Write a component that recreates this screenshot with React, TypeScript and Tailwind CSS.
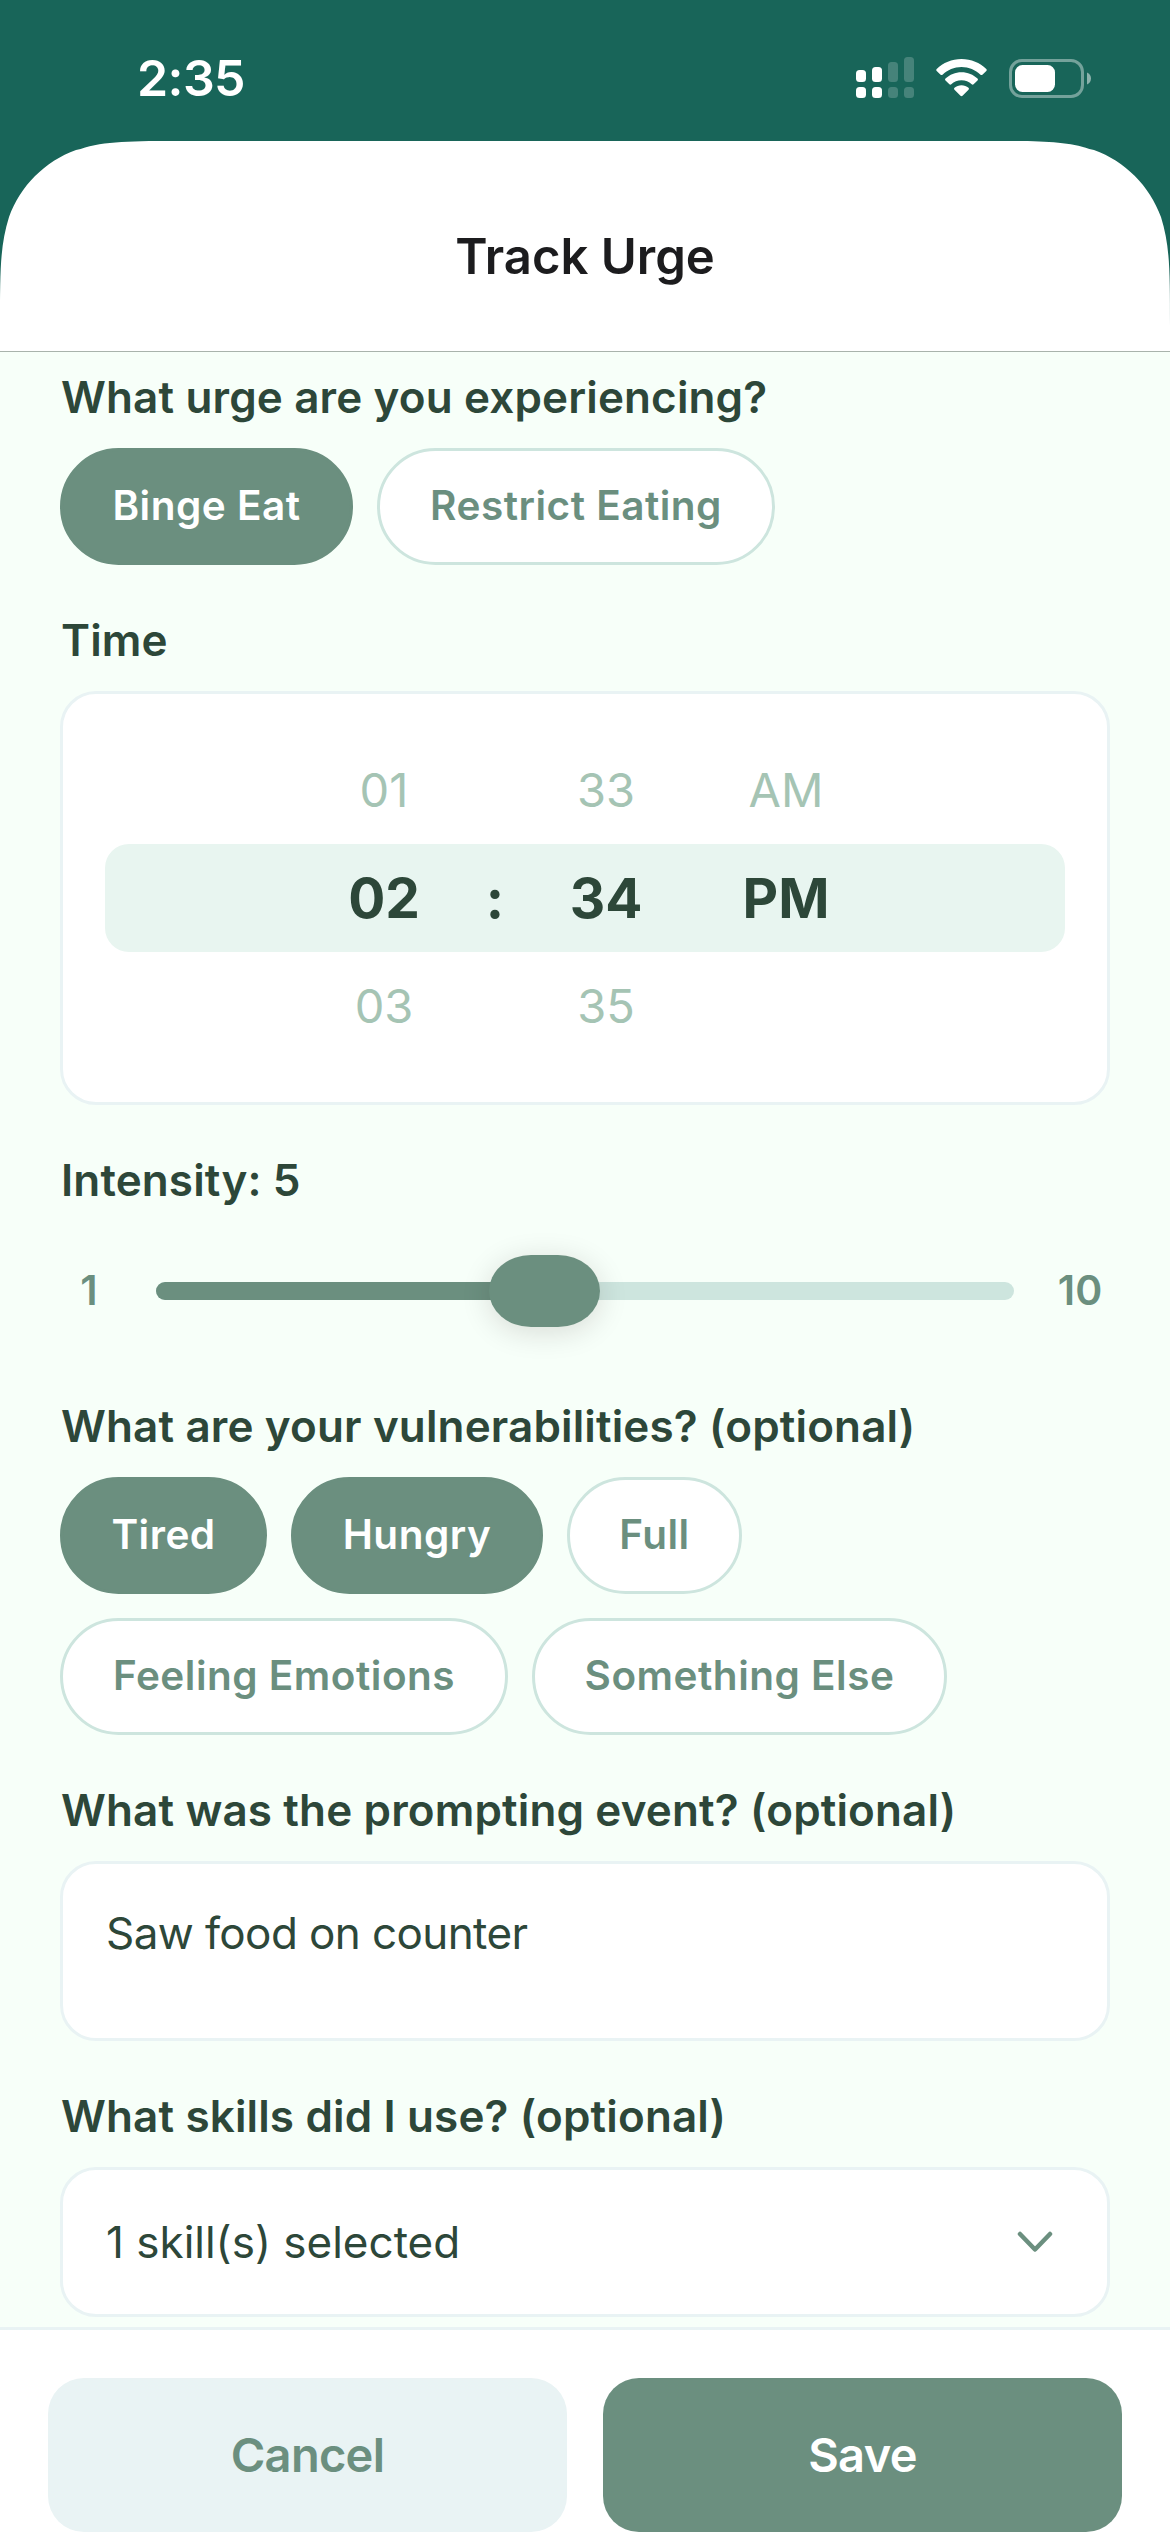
import { useState } from "react";
import clsx from "clsx";

const urges = [
  { label: "Binge Eat", width: "w-[293px]" },
  { label: "Restrict Eating", width: "w-[398px]" },
];

const vulnerabilities = [
  { label: "Tired", width: "w-[207px]" },
  { label: "Hungry", width: "w-[252px]" },
  { label: "Full", width: "w-[175px]" },
  { label: "Feeling Emotions", width: "w-[448px]" },
  { label: "Something Else", width: "w-[415px]" },
];

const StatusBar = () => (
  <div className="flex h-[141px] items-center justify-between pt-[15px] pr-[78px] pl-[137px] text-white">
    <span className="text-[50px] leading-none font-semibold tracking-[-0.6px]">2:35</span>
    <div className="flex items-center">
      {/* Dual SIM signal */}
      <svg className="mr-[22px]" width="58" height="42" viewBox="0 0 58 42" fill="currentColor">
        <rect x="0" y="13" width="10" height="12" rx="3.5" />
        <rect x="16" y="10" width="10" height="15" rx="3.5" />
        <rect x="32" y="5" width="10" height="20" rx="3.5" opacity="0.2" />
        <rect x="48" y="0" width="10" height="25" rx="3.5" opacity="0.2" />
        <rect x="0" y="30" width="10" height="11" rx="3.5" />
        <rect x="16" y="30" width="10" height="11" rx="3.5" />
        <rect x="32" y="30" width="10" height="11" rx="3.5" opacity="0.2" />
        <rect x="48" y="30" width="10" height="11" rx="3.5" opacity="0.2" />
      </svg>
      {/* Wifi */}
      <svg className="mr-[22px]" width="51" height="38" viewBox="0 0 51 38" fill="currentColor">
        <path d="M25.5 0C35.2 0 43.9 3.8 50.3 9.9c.6.6.6 1.4 0 2L46.4 15.7c-.6.5-1.3.5-1.9 0C39.5 10.9 32.8 8 25.5 8S11.5 10.9 6.5 15.7c-.6.5-1.3.5-1.9 0L.7 11.9c-.6-.6-.6-1.4 0-2C7.1 3.8 15.8 0 25.5 0Z" />
        <path d="M25.5 13.2c6.2 0 11.8 2.4 16 6.3.6.6.6 1.4 0 2l-3.9 3.8c-.6.5-1.3.5-1.9 0-2.7-2.5-6.3-4-10.2-4s-7.5 1.5-10.2 4c-.6.5-1.3.5-1.9 0l-3.9-3.8c-.6-.6-.6-1.4 0-2 4.2-3.9 9.8-6.3 16-6.3Z" />
        <path d="M25.5 26.2c2.7 0 5.1 1 7 2.6.6.6.6 1.4 0 2l-6 5.9c-.6.6-1.4.6-2 0l-6-5.9c-.6-.6-.6-1.4 0-2 1.9-1.6 4.3-2.6 7-2.6Z" />
      </svg>
      {/* Battery */}
      <svg width="83" height="39" viewBox="0 0 83 39" fill="currentColor">
        <rect x="1.5" y="1.5" width="72" height="36" rx="11.5" fill="none" stroke="currentColor" strokeWidth="3" opacity="0.4" />
        <rect x="6" y="6" width="40" height="27" rx="7.5" />
        <path d="M78 13.5c2.4 1 4 3.300 4 6s-1.600 5-4 6Z" opacity="0.5" />
      </svg>
    </div>
  </div>
);

const SheetHeader = () => (
  <div className="relative flex h-[211px] items-center justify-center border-b border-[#a9b3ac] bg-white pt-[21px]">
    <svg className="absolute top-0 left-0" width="184" height="184" viewBox="0 0 1.52866 1.52866" fill="#186559">
      <path d="M0 0H1.52866C1.08849 0 .86841 0 .66993 .0655L.63149 .07491C.37282 .16906 .16906 .37282 .07491 .63149C0 .86841 0 1.08849 0 1.52866Z" />
    </svg>
    <svg className="absolute top-0 right-0 -scale-x-100" width="184" height="184" viewBox="0 0 1.52866 1.52866" fill="#186559">
      <path d="M0 0H1.52866C1.08849 0 .86841 0 .66993 .0655L.63149 .07491C.37282 .16906 .16906 .37282 .07491 .63149C0 .86841 0 1.08849 0 1.52866Z" />
    </svg>
    <h1 className="text-[49px] leading-none font-semibold text-[#1c1c1e]">Track Urge</h1>
  </div>
);

const Label = ({ children }: { children: React.ReactNode }) => (
  <h2 className="mb-6 h-[54px] pl-px text-[44px] leading-[54px] font-semibold tracking-[0.14px] whitespace-nowrap text-[#2d4739]">
    {children}
  </h2>
);

interface ChipProps {
  label: string;
  width: string;
  selected: boolean;
  onClick: () => void;
}

const Chip = ({ label, width, selected, onClick }: ChipProps) => (
  <button
    onClick={onClick}
    className={clsx(
      "flex h-[117px] items-center justify-center rounded-full border-3 text-[40.5px] font-semibold tracking-[0.5px] whitespace-nowrap",
      width,
      selected ? "border-[#6b8f7f] bg-[#6b8f7f] text-white" : "border-[#cde5de] bg-white text-[#6b8f7f]"
    )}
  >
    {label}
  </button>
);

const PickerColumn = ({ values, className }: { values: string[]; className: string }) => (
  <div className={clsx("flex flex-col", className)}>
    {values.map((value, i) => (
      <div
        key={i}
        className={clsx(
          "flex h-[108px] items-center justify-center",
          i === 1 ? "text-[55px] font-bold text-[#2d4739]" : "text-[47px] text-[#a5c4b4]"
        )}
      >
        {value}
      </div>
    ))}
  </div>
);

const TimePicker = () => (
  <div className="relative h-[414px] rounded-[36px] border-3 border-[#e9f3f4] bg-white px-[42px] py-[42px]">
    <div className="absolute inset-x-[42px] top-[150px] h-[108px] rounded-3xl bg-[#e8f5f0]" />
    <div className="relative flex pl-[189px]">
      <PickerColumn className="w-[180px]" values={["01", "02", "03"]} />
      <PickerColumn className="w-[42px]" values={["", ":", ""]} />
      <PickerColumn className="w-[180px]" values={["33", "34", "35"]} />
      <PickerColumn className="w-[180px]" values={["AM", "PM", ""]} />
    </div>
  </div>
);

const IntensitySlider = ({ value }: { value: number }) => {
  const left = ((value - 1) / 9) * (858 - 111);
  return (
    <div className="flex h-[120px] items-center gap-9 text-[41px] font-semibold text-[#6b8f7f]">
      <span className="w-[60px] pr-0.5 text-center">1</span>
      <div className="relative h-[18px] flex-1 rounded-full bg-[#cde5de]">
        <div className="h-full rounded-full bg-[#6b8f7f]" style={{ width: left + 55 }} />
        <div
          className="absolute top-[-27px] h-[72px] w-[111px] rounded-[42px/36px] bg-[#6b8f7f] shadow-[0_5px_30px_rgba(30,10,10,0.14)]"
          style={{ left: left + 1 }}
        />
      </div>
      <span className="w-[60px] text-center">10</span>
    </div>
  );
};

const App = () => {
  const [urge, setUrge] = useState("Binge Eat");
  const [selected, setSelected] = useState(["Tired", "Hungry"]);

  const toggle = (label: string) =>
    setSelected((prev) => (prev.includes(label) ? prev.filter((v) => v !== label) : [...prev, label]));

  return (
    <div className="flex h-[2532px] w-[1170px] flex-col overflow-hidden bg-[#186559] font-['Inter',sans-serif]">
      <StatusBar />
      <SheetHeader />

      <main className="flex flex-1 flex-col gap-12 overflow-hidden bg-[#f7fff9] px-[60px] pt-[18px]">
        <section>
          <Label>What urge are you experiencing?</Label>
          <div className="flex gap-6">
            {urges.map((item) => (
              <Chip key={item.label} {...item} selected={urge === item.label} onClick={() => setUrge(item.label)} />
            ))}
          </div>
        </section>

        <section>
          <Label>Time</Label>
          <TimePicker />
        </section>

        <section>
          <Label>Intensity: 5</Label>
          <IntensitySlider value={5} />
        </section>

        <section>
          <Label>What are your vulnerabilities? (optional)</Label>
          <div className="flex flex-wrap gap-6">
            {vulnerabilities.map((item) => (
              <Chip
                key={item.label}
                {...item}
                selected={selected.includes(item.label)}
                onClick={() => toggle(item.label)}
              />
            ))}
          </div>
        </section>

        <section>
          <Label>What was the prompting event? (optional)</Label>
          <div className="h-[180px] rounded-[36px] border-3 border-[#e9f3f4] bg-white px-[43px] py-[42px] text-[44px] leading-[54px] tracking-[-0.6px] text-[#2d4739]">
            Saw food on counter
          </div>
        </section>

        <section>
          <Label>What skills did I use? (optional)</Label>
          <div className="flex h-[150px] items-center justify-between rounded-[36px] border-3 border-[#e9f3f4] bg-white pr-[54px] pl-[43px] text-[44px] leading-[54px] text-[#2d4739]">
            1 skill(s) selected
            <svg width="36" height="22" viewBox="0 0 36 22" fill="none" stroke="#6b8f7f" strokeWidth="4.5" strokeLinecap="round" strokeLinejoin="round">
              <path d="M3 3L18 18.5L33 3" />
            </svg>
          </div>
        </section>
      </main>

      <footer className="flex gap-9 border-t-3 border-[#e9f3f4] bg-white px-12 pt-12 text-[47px] font-semibold tracking-[-0.7px]">
        <button className="h-[154px] flex-1 rounded-[36px] bg-[#e9f3f4] text-[#6b8f7f]">Cancel</button>
        <button className="h-[154px] flex-1 rounded-[36px] bg-[#6b8f7f] text-white">Save</button>
      </footer>
    </div>
  );
};

export default App;
